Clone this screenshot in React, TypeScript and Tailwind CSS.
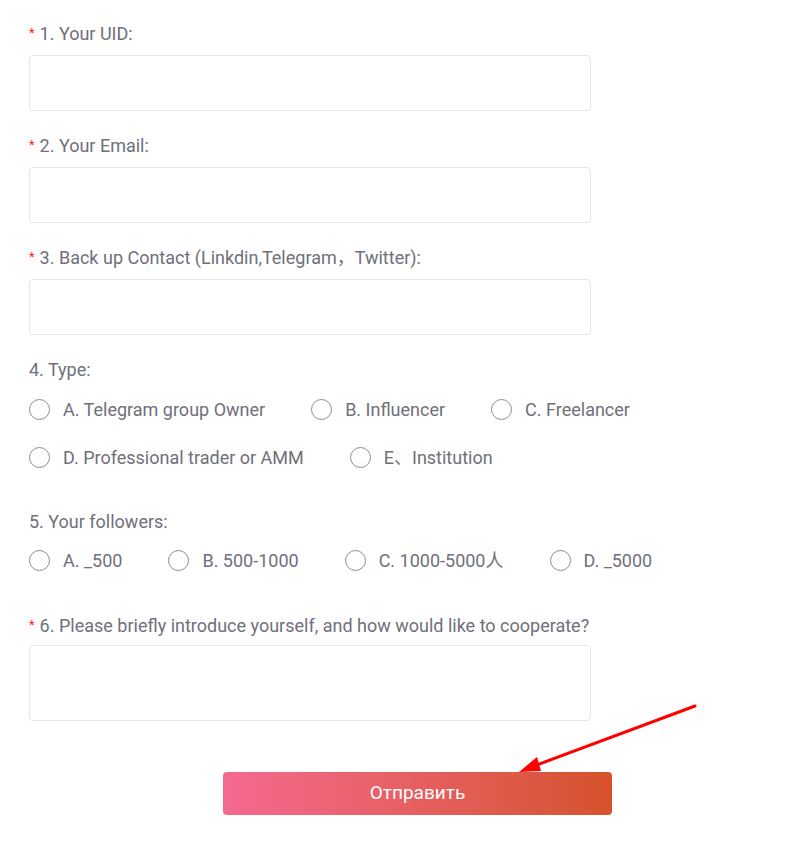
import React from "react";

const font = { fontFamily: "Roboto, 'Noto Sans CJK SC', sans-serif" };

const Label = ({ required, children }: { required?: boolean; children: React.ReactNode }) => (
  <div className="flex items-center h-[22px] text-[18px] leading-[22px] text-[#70707a]">
    {required && <span className="text-[#f5222d] text-[13px] mr-[5px] -mt-[2px]">*</span>}
    <span>{children}</span>
  </div>
);

const Radio = ({ label }: { label: string }) => (
  <label className="flex items-center mr-[46px] h-[24px] cursor-pointer">
    <span className="w-[21px] h-[21px] rounded-full border border-[#8c8c8c] bg-white mr-[13px] shrink-0" />
    <span className="text-[18px] text-[#70707a] whitespace-nowrap">{label}</span>
  </label>
);

const Field = ({ label, required = true }: { label: string; required?: boolean }) => (
  <div className="mb-[24px]">
    <Label required={required}>{label}</Label>
    <input className="mt-[10px] block w-[562px] h-[56px] rounded-[4px] border border-[#e6e6e6] bg-white outline-none" />
  </div>
);

export default function App() {
  return (
    <div className="relative min-h-screen bg-white" style={font}>
      <div className="pl-[29px] pt-[23px]">
        <Field label="1. Your UID:" />
        <Field label="2. Your Email:" />
        <Field label="3. Back up Contact (Linkdin,Telegram，Twitter):" />

        <Label>4. Type:</Label>
        <div className="mt-[16px] flex items-center">
          <Radio label="A. Telegram group Owner" />
          <Radio label="B. Influencer" />
          <Radio label="C. Freelancer" />
        </div>
        <div className="mt-[24px] flex items-center">
          <Radio label="D. Professional trader or AMM" />
          <Radio label="E、Institution" />
        </div>

        <div className="mt-[42px]">
          <Label>5. Your followers:</Label>
        </div>
        <div className="mt-[15px] flex items-center">
          <Radio label="A. _500" />
          <Radio label="B. 500-1000" />
          <Radio label="C. 1000-5000人" />
          <Radio label="D. _5000" />
        </div>

        <div className="mt-[43px]">
          <Label required>6. Please briefly introduce yourself, and how would like to cooperate?</Label>
        </div>
        <textarea className="mt-[8px] block w-[562px] h-[76px] rounded-[4px] border border-[#e6e6e6] bg-white outline-none resize-none" />

        <div className="mt-[51px] pl-[194px]">
          <button className="relative w-[389px] h-[43px] rounded-[4px] bg-gradient-to-r from-[#f4698f] via-[#e65f5f] to-[#d6522a] text-white text-[19px]">
            Отправить
            <span className="absolute right-[2px] top-[8px] text-[#ff3b3b] text-[14px] leading-none opacity-70 font-bold">1</span>
          </button>
        </div>
      </div>

      <svg className="absolute left-0 top-0 pointer-events-none" width="794" height="861">
        <line x1="695" y1="706" x2="534" y2="766" stroke="#f00" strokeWidth="3" strokeLinecap="round" />
        <polygon points="519,772 537,757 541,771" fill="#f00" />
      </svg>
    </div>
  );
}
